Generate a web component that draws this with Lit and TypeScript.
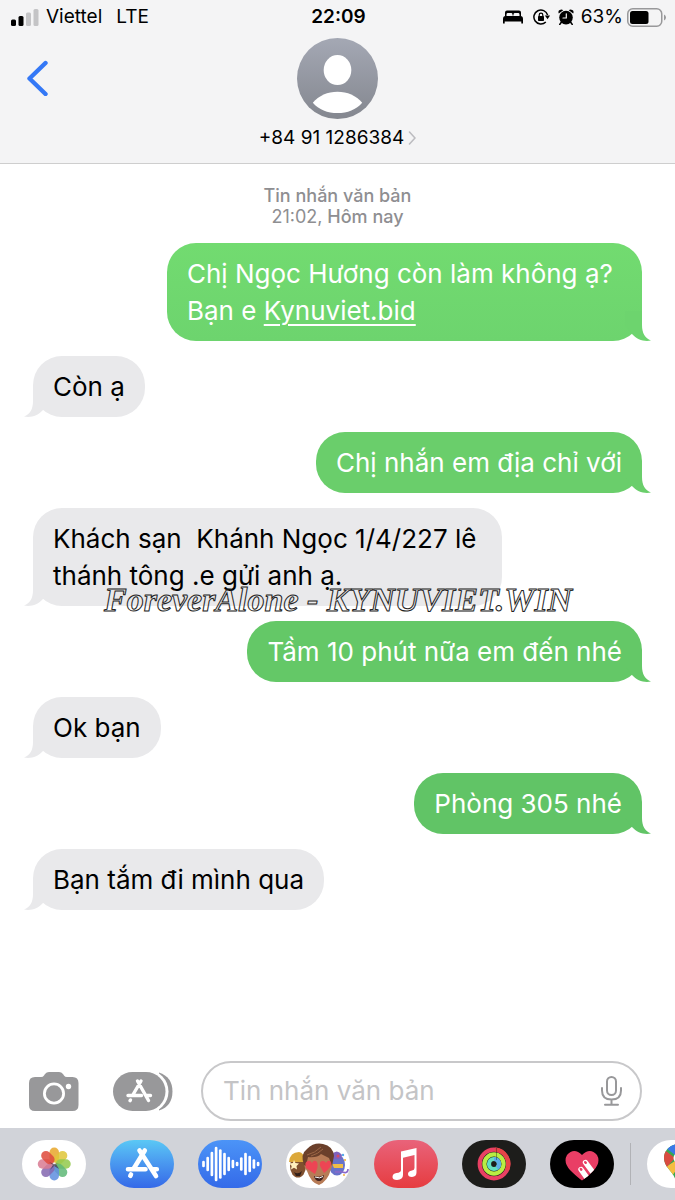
import { LitElement, html, css, svg, nothing } from "lit";
import { customElement, property } from "lit/decorators.js";
import { classMap } from "lit/directives/class-map.js";

interface Message {
  sent: boolean;
  text: string;
  link?: string;
  tone?: string;
}

const MESSAGES: Message[] = [
  { sent: true, text: "Chị Ngọc Hương còn làm không ạ? Bạn e ", link: "Kynuviet.bid", tone: "t1" },
  { sent: false, text: "Còn ạ" },
  { sent: true, text: "Chị nhắn em địa chỉ với", tone: "t2" },
  { sent: false, text: "Khách sạn  Khánh Ngọc 1/4/227 lê thánh tông .e gửi anh ạ." },
  { sent: true, text: "Tầm 10 phút nữa em đến nhé", tone: "t3" },
  { sent: false, text: "Ok bạn" },
  { sent: true, text: "Phòng 305 nhé", tone: "t4" },
  { sent: false, text: "Bạn tắm đi mình qua" },
];

@customElement("status-bar")
class StatusBar extends LitElement {
  static styles = css`
    :host { display: grid; grid-template-columns: 1fr auto 1fr; align-items: center; height: 34px; padding: 0 9px 0 11px; font-size: 19px; line-height: 24px; }
    .side { display: flex; align-items: center; }
    .right { justify-content: flex-end; }
    .carrier { margin-left: 7px; }
    .network { margin-left: 14px; }
    .time { font-weight: 600; }
    .bed { margin-right: 10px; }
    .lock { margin-right: 8px; }
    .alarm { margin-right: 7px; }
    .battery { margin-left: 4px; }
    svg { display: block; flex: none; }
  `;
  render() {
    return html`
      <div class="side">
        <svg width="28" height="17" viewBox="0 0 28 17" aria-hidden="true">
          <rect x="0" y="10.500" width="5" height="6.500" rx="1.500" />
          <rect x="7.500" y="7" width="5" height="10" rx="1.500" />
          <rect x="15" y="3.500" width="5" height="13.500" rx="1.500" fill="#c4c4c6" />
          <rect x="22.500" y="0" width="5" height="17" rx="1.500" fill="#c4c4c6" />
        </svg>
        <span class="carrier">Viettel</span><span class="network">LTE</span>
      </div>
      <span class="time">22:09</span>
      <div class="side right">
        <svg class="bed" width="20" height="14" viewBox="0 0 20 14" aria-hidden="true">
          <path d="M2 6V2.500Q2 .5 4 .5H16Q18 .5 18 2.500V6H16.500V4.500Q16.500 3 15.500 3H11.500Q10.500 3 10.500 4.500V5.500H9.500V4.500Q9.500 3 8.500 3H4.500Q3.500 3 3.500 4.500V6Z" />
          <path d="M0 13.500V9Q0 6 2.500 6H17.500Q20 6 20 9V13.500H18.300V11.500H1.700V13.500Z" />
        </svg>
        <svg class="lock" width="17" height="16" viewBox="0 0 17 16" aria-hidden="true">
          <path d="M14.600 6A7 7 0 1 0 12.800 13" fill="none" stroke="#000" stroke-width="1.500" />
          <path d="M11.800 6.500H17L14.600 10.300Z" />
          <rect x="5" y="7" width="6" height="5" rx=".8" />
          <path d="M6.200 7.500V6Q6.200 4.200 8 4.200T9.800 6V7.500" fill="none" stroke="#000" stroke-width="1.200" />
        </svg>
        <svg class="alarm" width="16" height="16" viewBox="0 0 16 16" aria-hidden="true">
          <circle cx="8" cy="8.600" r="6.800" />
          <path d="M.8 4.500Q-.3 2 1.700 1T5.200 1.200ZM15.200 4.500Q16.300 2 14.300 1T10.800 1.200Z" />
          <path d="M3.500 13L1.800 15.400M12.500 13L14.200 15.400" stroke="#000" stroke-width="1.600" stroke-linecap="round" />
          <path d="M8.300 4.800V9H5" fill="none" stroke="#f4f4f5" stroke-width="1.200" stroke-linecap="round" />
        </svg>
        <span>63%</span>
        <svg class="battery" width="39" height="19" viewBox="0 0 39 19" aria-hidden="true">
          <rect x=".75" y=".75" width="34" height="17.500" rx="5" fill="none" stroke="#98989a" stroke-width="1.500" />
          <rect x="3" y="3" width="18.500" height="13" rx="2.500" />
          <path d="M37 6.500Q39 7.500 39 9.500T37 12.500Z" fill="#98989a" />
        </svg>
      </div>`;
  }
}

@customElement("contact-header")
class ContactHeader extends LitElement {
  static styles = css`
    :host { display: grid; grid-template-columns: 1fr auto 1fr; padding: 4px 20px 14px; }
    button { font: inherit; color: inherit; border: 0; padding: 0; background: none; cursor: pointer; }
    .back { justify-self: start; align-self: start; margin-top: 22px; padding: 0 6px; }
    .contact { display: flex; flex-direction: column; align-items: center; gap: 8px; }
    .number { display: flex; align-items: center; gap: 4px; font-size: 19px; line-height: 22px; }
    svg { display: block; }
  `;
  render() {
    return html`
      <button class="back" aria-label="Quay lại">
        <svg width="22" height="36" viewBox="0 0 22 36"><path d="M19.500 3L3.500 18.500L19.500 34" fill="none" stroke="#3478f6" stroke-width="4.400" stroke-linecap="round" stroke-linejoin="round" /></svg>
      </button>
      <button class="contact">
        <svg width="81" height="81" viewBox="0 0 82 82" aria-hidden="true">
          <defs><linearGradient id="a" x2="0" y2="1"><stop stop-color="#a4a8b4" /><stop offset="1" stop-color="#84878f" /></linearGradient></defs>
          <circle cx="41" cy="41" r="41" fill="url(#a)" />
          <ellipse cx="41" cy="32.500" rx="14" ry="15.200" fill="#fff" />
          <path d="M16 65.500C22 58.500 31 54.500 41 54.500S60 58.500 66 65.500C60 72.500 51 76 41 76S22 72.500 16 65.500Z" fill="#fff" />
        </svg>
        <span class="number">+84 91 1286384
          <svg width="8" height="14" viewBox="0 0 8 14" aria-hidden="true"><path d="M1.500 1L7 7L1.500 13" fill="none" stroke="#bcbcc0" stroke-width="1.600" stroke-linecap="round" /></svg>
        </span>
      </button>`;
  }
}

@customElement("message-bubble")
class MessageBubble extends LitElement {
  @property({ attribute: false }) message!: Message;
  static styles = css`
    :host { display: flex; }
    .bubble { position: relative; box-sizing: border-box; max-width: 77%; margin: 0; padding: 12px 20px; border-radius: 29px; background: #e9e9eb; color: #000; font-size: 26px; line-height: 37px; white-space: pre-wrap; }
    .tail { position: absolute; bottom: 0; left: -9px; fill: #e9e9eb; }
    .sent { max-width: 78%; margin-left: auto; color: #fff; }
    .sent .tail { left: auto; right: -9px; transform: scaleX(-1); }
    .t1 { background: linear-gradient(#72db70, #6dd46e); }
    .t1 .tail { fill: #6dd46e; }
    .t2 { background: #6ace6b; }
    .t2 .tail { fill: #6ace6b; }
    .t3 { background: #64c867; }
    .t3 .tail { fill: #64c867; }
    .t4 { background: #61c466; }
    .t4 .tail { fill: #61c466; }
    a { color: inherit; text-decoration-thickness: 2px; text-underline-offset: 4px; }
  `;
  render() {
    const { sent, text, link, tone } = this.message;
    return html`<p class=${classMap({ bubble: true, sent, [tone ?? "received"]: true })}>${text}${link ? html`<a href="#">${link}</a>` : nothing}<svg class="tail" width="36" height="36" viewBox="0 0 36 36" aria-hidden="true"><path d="M9 6V20C9 28 6 33.500 0 35.500C7 37 14 34.500 19 29L26 20V6Z" /></svg></p>`;
  }
}

@customElement("message-composer")
class MessageComposer extends LitElement {
  static styles = css`
    :host { display: flex; align-items: center; padding: 0 33px 7px 29px; }
    button { display: block; flex: none; border: 0; padding: 0; background: none; cursor: pointer; }
    svg { display: block; }
    .apps { margin: 0 28px 0 34px; }
    .field { flex: 1; min-width: 0; display: flex; align-items: center; box-sizing: border-box; height: 60px; padding: 0 18px 0 20px; border: 2px solid #c8c8ca; border-radius: 30px; }
    input { flex: 1; min-width: 0; border: 0; outline: 0; padding: 0; background: none; font: inherit; font-size: 26px; line-height: 36px; color: #000; }
    input::placeholder { color: #c4c4c6; opacity: 1; }
  `;
  render() {
    return html`
      <button aria-label="Máy ảnh">
        <svg width="50" height="39" viewBox="0 0 50 39">
          <path d="M6 5H12Q14 5 15 3.500L16 2Q17.500 0 20 0H30Q32.500 0 34 2L35 3.500Q36 5 38 5H43.500Q49.500 5 49.500 11V33Q49.500 39 43.500 39H6Q0 39 0 33V11Q0 5 6 5Z" fill="#98989a" />
          <circle cx="25" cy="21.500" r="9.600" fill="none" stroke="#fff" stroke-width="2.800" />
          <circle cx="39.500" cy="14.500" r="2.700" fill="#fff" />
        </svg>
      </button>
      <button class="apps" aria-label="Ứng dụng">
        <svg width="60" height="39" viewBox="0 0 60 39">
          <path d="M46 .5Q59.500 5 59.500 19.500T46 38.500Z" fill="#98989a" />
          <rect x="-2" y="-2" width="57.500" height="43" rx="21.500" fill="#fff" />
          <rect width="52.500" height="39" rx="19.500" fill="#98989a" />
          <g fill="none" stroke="#fff" stroke-width="3.400" stroke-linecap="round"><path d="M28 9L19.500 23.500M24.500 9L35.500 28.500M15 23.500H28.500M33.500 23.500H37.500M17.500 28L17 28.700" /></g>
        </svg>
      </button>
      <div class="field">
        <input type="text" aria-label="Tin nhắn văn bản" placeholder="Tin nhắn văn bản" />
        <button aria-label="Ghi âm">
          <svg width="21" height="30" viewBox="0 0 21 30"><g fill="none" stroke="#98989a" stroke-width="2" stroke-linecap="round"><rect x="6" y="1" width="9" height="18" rx="4.500" /><path d="M1 12V14.500Q1 23.500 10.500 23.500T20 14.500V12M10.500 23.500V28.500M4 28.800H17" /></g></svg>
        </button>
      </div>`;
  }
}

const PETALS = ["#e8a62c", "#dfc63a", "#93c94d", "#60b877", "#5f8fe0", "#8468b0", "#d97b93", "#de4a3d"];

const APPS = [
  {
    name: "Ảnh",
    art: svg`<rect width="64" height="48" rx="24" fill="#fff"/>
      ${PETALS.map((color, i) => svg`<rect x="27.500" y="7.500" width="9.500" height="15" rx="4.700" fill=${color} opacity=".86" transform=${`rotate(${i * 45} 32.250 24)`}/>`)}
      <path d="M32 24L27 22L31 25L28 30L32 26L37 29L34 24L37 23Z" fill="#473847" opacity=".7"/>`,
  },
  {
    name: "App Store",
    art: svg`<defs><linearGradient id="s" x2="0" y2="1"><stop stop-color="#5ac8f5"/><stop offset=".45" stop-color="#4b9bf0"/><stop offset="1" stop-color="#3569e8"/></linearGradient></defs><rect width="64" height="48" rx="24" fill="url(#s)"/>
      <g fill="none" stroke="#fff" stroke-width="4.600" stroke-linecap="round"><path d="M34.800 10.500L23.500 29M29.500 10.500L46 36M18 29.300H35.500M42.500 29.300H46.800M21 34.500L20.300 35.800"/></g>`,
  },
  {
    name: "Tin nhắn thoại",
    art: svg`<defs><linearGradient id="w" x2="0" y2="1"><stop stop-color="#4c94f7"/><stop offset="1" stop-color="#346ae9"/></linearGradient></defs><rect width="64" height="48" rx="24" fill="url(#w)"/>
      <g stroke="#fff" stroke-width="2.700" stroke-linecap="round">${[4, 12, 22, 32, 27, 20, 12, 6, 2, 11, 20, 14, 7, 2].map((h, i) => svg`<path d=${`M${5.5 + i * 4.2} ${24 - h / 2}v${h}`}/>`)}</g>`,
  },
  {
    name: "Nhãn dán Memoji",
    art: svg`<defs><clipPath id="c"><rect width="64" height="48" rx="24"/></clipPath></defs><rect width="64" height="48" rx="24" fill="#fff"/><g clip-path="url(#c)">
      <ellipse cx="12" cy="26" rx="8" ry="11.500" fill="#80502f"/><path d="M3 22Q4 12 13 12Q18 12 19 22Z" fill="#dca83a"/><path d="M8 20l1.500 3 3.500.5-2.500 2.500.5 3.500-3-1.700-3 1.700.7-3.500L3.500 23.500l3.400-.5Z" fill="#fff0bd"/><path d="M8 32Q12 35 16 31L14 36H10Z" fill="#32201a"/>
      <ellipse cx="51" cy="25" rx="8" ry="10.500" fill="#6872ca"/><path d="M45 15Q51 8 56 15L55 19H46Z" fill="#7f61bd"/><path d="M46 24H57V28H48Z" fill="#efbd48"/><path d="M54 31Q62 35 62 29M49 32H54" fill="none" stroke="#8b69c9" stroke-width="1.600"/><circle cx="57" cy="15" r="1.200" fill="#55a9e9"/><circle cx="59" cy="20" r="1.100" fill="#f3b43d"/><circle cx="58" cy="35" r="1" fill="#f3b43d"/><circle cx="52" cy="16" r="1.500" fill="#d54c66"/>
      <path d="M20 20Q20 13 32 12Q45 13 45 21Q48 24 45 29Q42 41 33 45Q25 43 21 31Q16 25 20 20Z" fill="#b77b56"/>
      <path d="M18 25Q14 14 21 9Q28 2 37 4Q47 6 48 16L46 26L43 18L35 14Q31 18 22 17L20 26Z" fill="#6b402b"/><path d="M21 15Q29 13 35 7M25 16Q32 14 37 9" stroke="#9c6747" fill="none"/>
      <path d="M29 34L20 28Q18 22 22 21Q24 20 26 23Q28 19 31 22Q33 26 29 34ZM38 33L34 26Q33 21 37 21Q39 21 40 23Q42 19 45 22Q47 26 38 33Z" fill="#ed4554"/>
      <path d="M28 36Q34 38 38 35Q37 41 33 41Q29 41 28 36Z" fill="#3d211f"/><path d="M29 37Q34 39 37 36.500" stroke="#fff" fill="none"/></g>`,
  },
  {
    name: "Nhạc",
    art: svg`<defs><linearGradient id="m" x2="0" y2="1"><stop stop-color="#e9637a"/><stop offset="1" stop-color="#e63c40"/></linearGradient></defs><rect width="64" height="48" rx="24" fill="url(#m)"/>
      <path d="M27 11.500L42.500 8V32.500Q42.500 36.500 38 37Q34 37 34 34Q34 31 38 30.500Q40.500 30 40.500 28V15L29 17.700V35Q29 39.500 23 40Q18.500 40 18.500 37Q18.500 33.500 22.500 33Q27 32.500 27 30Z" fill="#fff"/>`,
  },
  {
    name: "Hoạt động",
    art: svg`<rect width="64" height="48" rx="24" fill="#1d1d1b"/><g fill="none" stroke-width="4.200"><circle cx="32" cy="24" r="14.300" stroke="#e94063"/><circle cx="32" cy="24" r="9.600" stroke="#b9ed43"/><circle cx="32" cy="24" r="5" stroke="#63dfc0"/><path d="M32 19A5 5 0 0 1 35 28" stroke="#5eaee8"/><path d="M33 9.700A14.300 14.300 0 0 1 45 30" stroke="#e84548"/></g><path d="M34.500 8V20" stroke="#1d1d1b" opacity=".4"/>`,
  },
  {
    name: "Digital Touch",
    art: svg`<defs><clipPath id="h"><path d="M32 40.500Q27 37 20 30Q13 22 17 15Q24 7 32 15Q40 7 47 15Q51 22 44 30Q38 37 32 40.500Z"/></clipPath></defs><rect width="64" height="48" rx="24" fill="#000"/>
      <g clip-path="url(#h)"><rect width="64" height="48" fill="#e93e65"/><g stroke="#fff" stroke-width="5.400" stroke-linecap="round"><path d="M31 29.500L40 42M35.500 22.500L47 38"/></g><g stroke="#e93e65" stroke-width="2.500" stroke-linecap="round"><path d="M30.800 29L31.300 29.600M35.200 22.200L35.700 22.800"/></g></g>`,
  },
];

@customElement("app-drawer")
class AppDrawer extends LitElement {
  static styles = css`
    :host { display: flex; gap: 16px; padding: 12px 0 12px 22px; background: #d1d3d9; overflow: hidden; }
    .recent { display: flex; flex: none; gap: 24px; }
    button { display: block; flex: none; border: 0; padding: 0; background: none; cursor: pointer; }
    svg { display: block; }
    .divider { flex: none; width: 1px; margin: 3px 0; background: #b1b2b6; }
  `;
  render() {
    return html`
      <div class="recent">${APPS.map((app) => html`<button aria-label=${app.name}><svg width="64" height="48" viewBox="0 0 64 48">${app.art}</svg></button>`)}</div>
      <div class="divider"></div>
      <button aria-label="Google Maps">
        <svg width="64" height="48" viewBox="0 0 64 48">
          <rect width="64" height="48" rx="24" fill="#fff" />
          <defs><clipPath id="p"><path d="M32 4C24 4 17 10 17 18C17 28 27 31 29 42Q32 47 35 42C37 31 47 28 47 18C47 10 40 4 32 4Z" /></clipPath></defs>
          <g clip-path="url(#p)"><path d="M17 0H47V48H17Z" fill="#36a852" /><path d="M17 28L42 12L25 36Z" fill="#f5bd40" /><path d="M15 8L28 18L18 29H12Z" fill="#d94b3f" /><path d="M19 8L32 18L48 8V0H19Z" fill="#3c78e8" /></g>
          <circle cx="32" cy="18" r="5.500" fill="#fff" />
        </svg>
      </button>`;
  }
}

@customElement("app-root")
class AppRoot extends LitElement {
  static styles = css`
    :host { display: flex; flex-direction: column; min-height: 100vh; background: #fff; color: #000; font-family: Inter, "Noto Sans", sans-serif; overflow: hidden; }
    header { background: #f4f4f5; border-bottom: 1px solid #cecece; }
    main { flex: 1; padding: 21px 33px 24px; }
    .stamp { margin: 0 0 16px; text-align: center; color: #8e8e91; font-size: 18px; line-height: 21px; font-weight: 500; }
    .day { display: block; }
    .hour { font-weight: 400; }
    .thread { display: flex; flex-direction: column; gap: 15px; margin: 0; padding: 0; list-style: none; }
    .row { position: relative; }
    .watermark { position: absolute; left: 71px; bottom: -16px; font: italic bold 34px/44px "Liberation Serif", serif; white-space: nowrap; color: transparent; -webkit-text-stroke: 1px #222; pointer-events: none; }
  `;
  render() {
    return html`
      <header><status-bar></status-bar><contact-header></contact-header></header>
      <main>
        <p class="stamp">Tin nhắn văn bản<span class="day"><span class="hour">21:02,</span> Hôm nay</span></p>
        <ul class="thread">
          ${MESSAGES.map((message, i) => html`<li class="row"><message-bubble .message=${message}></message-bubble>${i === 3 ? html`<span class="watermark">ForeverAlone - KYNUVIET.WIN</span>` : nothing}</li>`)}
        </ul>
      </main>
      <message-composer></message-composer>
      <app-drawer></app-drawer>`;
  }
}
